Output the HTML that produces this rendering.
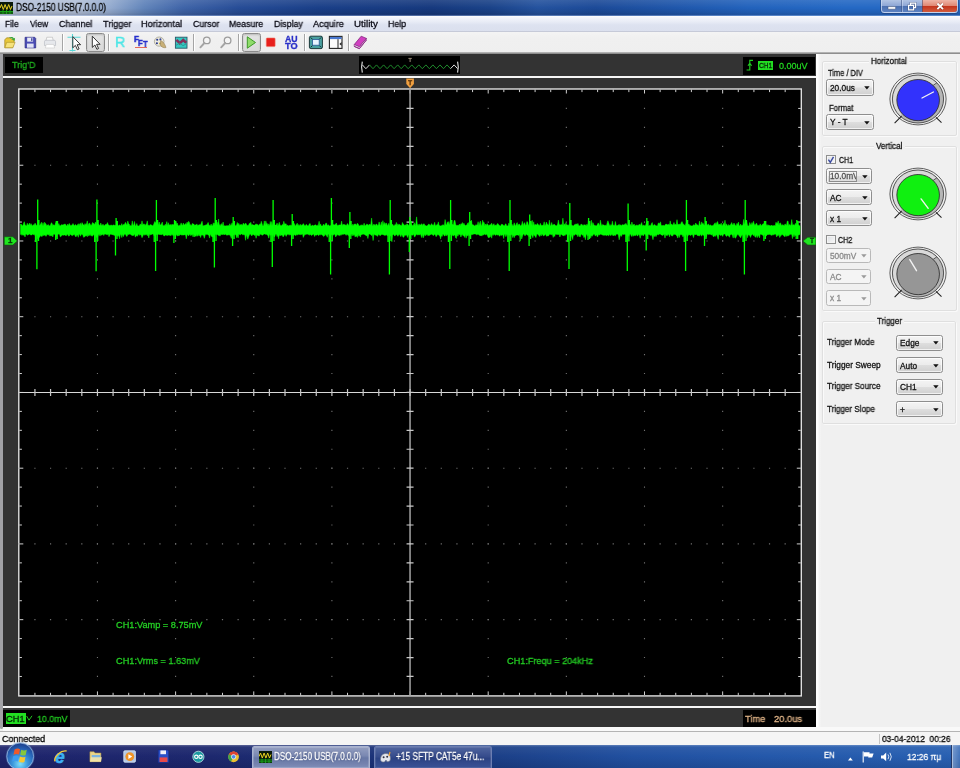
<!DOCTYPE html>
<html><head><meta charset="utf-8"><title>DSO-2150 USB(7.0.0.0)</title>
<style>
html,body{margin:0;padding:0;}
body{width:960px;height:768px;position:relative;overflow:hidden;background:#f0f0f0;font-family:"Liberation Sans",sans-serif;}
.t{position:absolute;height:20px;line-height:20px;white-space:pre;transform-origin:0 50%;will-change:transform;-webkit-text-stroke-width:0.28px;}
</style></head><body>
<div style="position:absolute;left:0.00px;top:0.00px;width:960.00px;height:16.20px;background:linear-gradient(90deg,#b4c0d6 0%,#b2c0d8 8%,#93aace 11.5%,#6184ba 15%,#3f64a8 19%,#264c96 25%,#1a3f88 33%,#16397e 45%,#1a4288 51%,#24529e 56%,#1c4a98 62%,#1f56aa 70%,#2262bc 78%,#2468c4 88%,#2468c4 100%);"></div>
<div style="position:absolute;left:0.00px;top:0.00px;width:960.00px;height:16.20px;background:linear-gradient(180deg,rgba(255,255,255,.10) 0%,rgba(255,255,255,0) 50%,rgba(0,0,0,.10) 82%,rgba(0,0,20,.18) 90%,rgba(190,210,245,.5) 100%);"></div>
<svg style="position:absolute;left:0;top:1.5px" width="13" height="12" viewBox="0 0 13 12"><rect width="13" height="12" fill="#0a1a0a"/><path d="M0,6l1.5,-3.5l1.8,5l1.8,-5l1.8,5l1.8,-5l1.8,5l1.5,-3.5" stroke="#e8d020" stroke-width="1" fill="none"/><path d="M0,9.5h13M0,11h13M3,8v4M6.5,8v4M10,8v4" stroke="#18a018" stroke-width="1"/></svg>
<div class="t" style="left:16.00px;top:-2.60px;font-size:10.6px;color:#000;transform:scaleX(0.7874);">DSO-2150 USB(7.0.0.0)</div>
<div style="position:absolute;left:880.60px;top:0.00px;width:77.40px;height:13.00px;border:1px solid rgba(200,215,240,.8);border-top:none;border-radius:0 0 3.5px 3.5px;box-sizing:border-box;background:linear-gradient(180deg,#b2c4e4 0%,#90a8d6 46%,#4c70b0 52%,#5c82c2 100%);box-shadow:0 0 0 1px rgba(30,50,100,.45);"></div>
<div style="position:absolute;left:922.40px;top:0.00px;width:34.60px;height:12.20px;background:linear-gradient(180deg,#efb4a6 0%,#e18a76 46%,#c4341c 52%,#d25c3e 100%);border-radius:0 0 3px 0;border-left:1px solid rgba(60,70,110,.55);box-sizing:border-box;"></div>
<div style="position:absolute;left:900.60px;top:0.00px;width:1.00px;height:12.20px;background:rgba(60,80,130,.55);box-shadow:1px 0 0 rgba(220,230,250,.45);"></div>
<svg style="position:absolute;left:881px;top:0" width="78" height="13" viewBox="881 0 78 13"><rect x="888" y="6.6" width="7.6" height="2.6" rx=".6" fill="#fff" stroke="#3a4a70" stroke-width=".5"/><path d="M908.6,5.3h5v4.6h-5zM910.6,5v-1.9h5v4.6h-1.8" stroke="#3a4a70" stroke-width="2" fill="none" opacity=".6"/><path d="M908.6,5.3h5v4.6h-5zM910.6,5v-1.9h5v4.6h-1.8" stroke="#fff" stroke-width="1.2" fill="none"/><path d="M937.4,3.5l5.6,5.6M943,3.5l-5.6,5.6" stroke="#5a2018" stroke-width="3" opacity=".55"/><path d="M937.4,3.5l5.6,5.6M943,3.5l-5.6,5.6" stroke="#fff" stroke-width="1.9"/></svg>
<div style="position:absolute;left:0.00px;top:16.10px;width:960.00px;height:15.50px;background:linear-gradient(180deg,#fefefe 0%,#f3f5fb 12%,#e8ecf6 38%,#dde2f0 60%,#dbe0ee 100%);border-bottom:1px solid #c6cad8;box-sizing:border-box;"></div>
<div class="t" style="left:5.30px;top:13.50px;font-size:9.4px;color:#0a0a14;transform:scaleX(0.8979);">File</div>
<div class="t" style="left:30.00px;top:13.50px;font-size:9.4px;color:#0a0a14;transform:scaleX(0.8908);">View</div>
<div class="t" style="left:59.00px;top:13.50px;font-size:9.4px;color:#0a0a14;transform:scaleX(0.9538);">Channel</div>
<div class="t" style="left:102.60px;top:13.50px;font-size:9.4px;color:#0a0a14;transform:scaleX(0.9719);">Trigger</div>
<div class="t" style="left:141.00px;top:13.50px;font-size:9.4px;color:#0a0a14;transform:scaleX(0.9759);">Horizontal</div>
<div class="t" style="left:193.00px;top:13.50px;font-size:9.4px;color:#0a0a14;transform:scaleX(0.9395);">Cursor</div>
<div class="t" style="left:229.30px;top:13.50px;font-size:9.4px;color:#0a0a14;transform:scaleX(0.9351);">Measure</div>
<div class="t" style="left:274.00px;top:13.50px;font-size:9.4px;color:#0a0a14;transform:scaleX(0.9409);">Display</div>
<div class="t" style="left:313.40px;top:13.50px;font-size:9.4px;color:#0a0a14;transform:scaleX(0.9726);">Acquire</div>
<div class="t" style="left:354.30px;top:13.50px;font-size:9.4px;color:#0a0a14;transform:scaleX(1.0445);">Utility</div>
<div class="t" style="left:388.20px;top:13.50px;font-size:9.4px;color:#0a0a14;transform:scaleX(0.9414);">Help</div>
<div style="position:absolute;left:0.00px;top:31.60px;width:960.00px;height:21.40px;background:linear-gradient(180deg,#f4f4f4,#f0f0f0 30%,#efefef);"></div>
<div style="position:absolute;left:0.00px;top:52.40px;width:960.00px;height:2.00px;background:linear-gradient(180deg,#c4c4c4,#7c7c7c);"></div>
<div style="position:absolute;left:62.00px;top:34.00px;width:1.00px;height:17.00px;background:#a5a5a5;box-shadow:1px 0 0 #fff;"></div>
<div style="position:absolute;left:107.50px;top:34.00px;width:1.00px;height:17.00px;background:#a5a5a5;box-shadow:1px 0 0 #fff;"></div>
<div style="position:absolute;left:193.20px;top:34.00px;width:1.00px;height:17.00px;background:#a5a5a5;box-shadow:1px 0 0 #fff;"></div>
<div style="position:absolute;left:237.80px;top:34.00px;width:1.00px;height:17.00px;background:#a5a5a5;box-shadow:1px 0 0 #fff;"></div>
<div style="position:absolute;left:303.50px;top:34.00px;width:1.00px;height:17.00px;background:#a5a5a5;box-shadow:1px 0 0 #fff;"></div>
<div style="position:absolute;left:347.80px;top:34.00px;width:1.00px;height:17.00px;background:#a5a5a5;box-shadow:1px 0 0 #fff;"></div>
<div style="position:absolute;left:86.00px;top:33.30px;width:19.30px;height:18.80px;border:1px solid #8b8b8b;border-radius:2.5px;box-sizing:border-box;background:linear-gradient(#e4e4e4,#dadada);box-shadow:inset 0 1px 2px rgba(0,0,0,.18);"></div>
<div style="position:absolute;left:241.50px;top:33.30px;width:19.30px;height:18.80px;border:1px solid #8b8b8b;border-radius:2.5px;box-sizing:border-box;background:linear-gradient(#e4e4e4,#dadada);box-shadow:inset 0 1px 2px rgba(0,0,0,.18);"></div>
<svg style="position:absolute;left:0;top:31px" width="400" height="24" viewBox="0 31 400 24"><g transform="translate(10,42.8) scale(.9) translate(-10.3,-41.8)"><path d="M4.5,38.5l2,-2.2h4l1.2,1.4h3.2v3l-1.6,6.5h-8.8z" fill="#e8c83a" stroke="#9a7a10" stroke-width=".7"/><path d="M4.6,47.3l2,-6h9.4l-2.6,6z" fill="#f6e27a" stroke="#a08418" stroke-width=".6"/><path d="M9,36.5c2,-1.6 4.5,-1.4 5.6,.4l1.4,-.8l-.6,3.4l-3,-1.1l1.1,-.7c-.9,-1.1 -2.6,-1.2 -4.5,-1.2z" fill="#36a636"/></g><g transform="translate(30.4,42.6) scale(.9) translate(-30.2,-42.1)"><path d="M24.3,36.2h10.6l1.2,1.2v10.6h-11.8z" fill="#4a4cb4" stroke="#2c2c84" stroke-width=".8"/><rect x="26.6" y="36.6" width="6.6" height="4.4" fill="#e8eaf6"/><rect x="31" y="37.2" width="1.5" height="3" fill="#3a3e9a"/><rect x="26.4" y="43.2" width="7.4" height="4.6" fill="#dfe2f4"/></g><g transform="translate(50,42.6) scale(.88) translate(-50.1,-42.1)"><path d="M46.5,36h6.4l1,4.5h-8.4z" fill="#fafafa" stroke="#aaa" stroke-width=".6"/><path d="M43.8,41c0,-1 .6,-1.6 1.6,-1.6h9.4c1,0 1.6,.6 1.6,1.6v4.4h-12.6z" fill="#e6e8ec" stroke="#b4b7c0" stroke-width=".7"/><path d="M45.8,44.2h8.6l1,4h-10.6z" fill="#fff" stroke="#c4c4c4" stroke-width=".6"/></g><path d="M67.5,37.2h13M72.5,34v17.5M69.5,50.5h6" stroke="#58d8d8" stroke-width="1.1" fill="none"/><path d="M72.8,36.6v11.2l2.6,-2.4l2,4.3l1.7,-.8l-2,-4.2h3.5z" fill="#fff" stroke="#222" stroke-width=".9" stroke-linejoin="round"/><path d="M92.3,36.2v11.2l2.6,-2.4l2,4.3l1.7,-.8l-2,-4.2h3.5z" fill="#fff" stroke="#222" stroke-width=".9" stroke-linejoin="round"/><circle cx="206.8" cy="40.4" r="3.3" fill="#f4f4f4" stroke="#9c9c9c" stroke-width="1.3"/><path d="M204.4,43l-4,4.3" stroke="#a4a4a4" stroke-width="1.9" stroke-linecap="round"/><circle cx="227.60000000000002" cy="40.4" r="3.3" fill="#f4f4f4" stroke="#9c9c9c" stroke-width="1.3"/><path d="M225.20000000000002,43l-4,4.3" stroke="#a4a4a4" stroke-width="1.9" stroke-linecap="round"/><ellipse cx="159.2" cy="41.6" rx="4.8" ry="4.6" fill="#eceadf" stroke="#9a9684" stroke-width=".7"/><circle cx="157.2" cy="39.8" r="1.05" fill="#2a3a8a"/><circle cx="160.4" cy="39.4" r="1.05" fill="#3a4a9a"/><circle cx="156.9" cy="43.2" r="1.05" fill="#2a3a8a"/><circle cx="160" cy="43.4" r="1" fill="#c8b040"/><path d="M160.6,40.4c2.4,1 4.6,4 5.4,7.2c-2.4,.6 -4.8,-.6 -5.6,-2.6z" fill="#c8b078" stroke="#8a7448" stroke-width=".5"/><rect x="175.4" y="37.2" width="11.6" height="11" fill="#34c8c0" stroke="#2a5868" stroke-width=".9"/><path d="M176.4,39.8l3.4,3.4l3.4,-3.2l3,2.8" stroke="#86305a" stroke-width="2.6" fill="none"/><path d="M175.8,45.4l3.8,-2.2l3.4,2.4l3.8,-2" stroke="#2a9a98" stroke-width="1" fill="none"/><path d="M247.3,36.8l8.2,5.7l-8.2,5.7z" fill="#8fdc6a" stroke="#3e9a28" stroke-width="1"/><rect x="266.3" y="38" width="8.8" height="8.6" rx=".8" fill="#e8201c" stroke="#f07060" stroke-width=".6"/><rect x="309.4" y="36.2" width="13" height="12.4" rx="1.4" fill="#4aa0a0" stroke="#1c3a3a" stroke-width="1"/><rect x="312.6" y="39.6" width="6.6" height="5.6" fill="#e8f4ff" stroke="#2a5a9a" stroke-width=".8"/><path d="M310.6,37.4l1.8,1.8M321.2,37.4l-1.8,1.8M310.6,47.4l1.8,-1.8M321.2,47.4l-1.8,-1.8" stroke="#0c2424" stroke-width=".9"/><rect x="329.4" y="36.4" width="12.6" height="12" fill="#fbfbfb" stroke="#222" stroke-width="1.1"/><rect x="329.9" y="36.9" width="11.6" height="2.2" fill="#4a78d0"/><path d="M338,39.2v9" stroke="#222" stroke-width="1"/><path d="M341.6,42l-2.2,1.9l2.2,1.9z" fill="#222"/><path d="M354.2,44.6l7,-8.4l5.2,2.2l-7,8.4z" fill="#d040c0" stroke="#7a1a74" stroke-width=".7"/><path d="M354.2,44.6l5.2,2.2l7,-8.4v1.6l-7,8.6l-5.2,-2.2z" fill="#f4e6f4" stroke="#7a1a74" stroke-width=".6"/><path d="M354.2,46.4l5.2,2.2l7,-8.6" stroke="#902a8a" stroke-width="1" fill="none"/></svg>
<div class="t" style="left:114.60px;top:32.30px;font-size:14.8px;color:#4ee6e6;transform:scaleX(0.9543);-webkit-text-stroke:0.5px #4ee6e6;">R</div>
<div class="t" style="left:134.00px;top:29.40px;font-size:9.4px;color:#2630cc;font-weight:bold;transform:scaleX(0.8708);-webkit-text-stroke:0.5px #2630cc;">F</div>
<div class="t" style="left:138.40px;top:32.60px;font-size:9.4px;color:#2630cc;font-weight:bold;transform:scaleX(0.8011);-webkit-text-stroke:0.5px #2630cc;">F</div>
<div class="t" style="left:142.50px;top:33.90px;font-size:9.0px;color:#2630cc;font-weight:bold;transform:scaleX(0.8367);-webkit-text-stroke:0.5px #2630cc;">T</div>
<div style="position:absolute;left:134.60px;top:46.90px;width:12.60px;height:1.20px;background:#e05040;opacity:.85;"></div>
<div class="t" style="left:284.60px;top:28.80px;font-size:8.6px;color:#2a30c8;font-weight:bold;transform:scaleX(1.0144);">AU</div>
<div class="t" style="left:284.60px;top:35.90px;font-size:8.6px;color:#2a30c8;font-weight:bold;transform:scaleX(1.0689);">TO</div>
<div style="position:absolute;left:0.00px;top:54.20px;width:815.90px;height:673.20px;background:#333;"></div>
<div style="position:absolute;left:0.00px;top:54.20px;width:2.80px;height:674.60px;background:#a2a2a6;border-radius:0 0 2px 2px;"></div>
<div style="position:absolute;left:2.60px;top:76.00px;width:813.60px;height:1.90px;background:#f6f6f6;"></div>
<div style="position:absolute;left:2.60px;top:705.70px;width:813.60px;height:1.90px;background:#f6f6f6;"></div>
<div style="position:absolute;left:5.00px;top:57.00px;width:37.50px;height:16.00px;background:#000;"></div>
<div class="t" style="left:11.60px;top:55.40px;font-size:9.2px;color:#1fb01f;transform:scaleX(0.9831);">Trig'D</div>
<div style="position:absolute;left:359.00px;top:56.00px;width:100.80px;height:17.80px;background:#000;"></div>
<svg style="position:absolute;left:359px;top:56px" width="102" height="18" viewBox="359 56 102 18"><path d="M362.4,64.9 365.9,68.7 369.5,64.9" stroke="#ddd" stroke-width="1" fill="none"/><path d="M369.5,64.9 373.0,68.7 376.5,64.9 380.0,68.7 383.6,64.9 387.1,68.7 390.6,64.9 394.1,68.7 397.7,64.9 401.2,68.7 404.7,64.9 408.2,68.7 411.8,64.9 415.3,68.7 418.8,64.9 422.3,68.7 425.9,64.9 429.4,68.7 432.9,64.9 436.4,68.7 440.0,64.9 443.5,68.7 447.0,64.9 450.5,68.7" stroke="#1f8a2c" stroke-width="1" fill="none"/><path d="M450.5,68.7 454.1,64.9 457.6,68.7" stroke="#ddd" stroke-width="1" fill="none"/><path d="M362.3,61.7q-1.4,5.5 0,10.9M457.6,61.7q1.4,5.5 0,10.9" stroke="#e8e8e8" stroke-width="1.1" fill="none"/><path d="M408.4,58.4h3.4M410.1,58.4v3.6" stroke="#9a8a78" stroke-width="1" fill="none"/></svg>
<div style="position:absolute;left:742.50px;top:56.60px;width:72.00px;height:18.20px;background:#000;"></div>
<svg style="position:absolute;left:744px;top:58px" width="12" height="14" viewBox="744 58 12 14"><path d="M746.6,70h3.2v-9.6h3.2M748,65.8l1.8,-2.6l1.8,2.6" stroke="#20d020" stroke-width="1.1" fill="none"/></svg>
<div style="position:absolute;left:757.60px;top:61.40px;width:15.00px;height:8.60px;background:#22e022;"></div>
<div class="t" style="left:758.60px;top:55.80px;font-size:7.2px;color:#062006;transform:scaleX(0.9025);">CH1</div>
<div class="t" style="left:779.20px;top:55.60px;font-size:9px;color:#22d422;transform:scaleX(0.9991);">0.00uV</div>
<div style="position:absolute;left:3.20px;top:710.00px;width:67.00px;height:17.40px;background:#000;"></div>
<div style="position:absolute;left:5.50px;top:713.00px;width:20.40px;height:11.20px;background:#22e022;"></div>
<div class="t" style="left:6.40px;top:708.80px;font-size:9.4px;color:#042004;transform:scaleX(0.9891);">CH1</div>
<svg style="position:absolute;left:26px;top:713px" width="8" height="10" viewBox="26 713 8 10"><path d="M26.6,716l2.4,4.2l3,-4.4" stroke="#20c020" stroke-width="1" fill="none"/></svg>
<div class="t" style="left:36.80px;top:708.80px;font-size:9.2px;color:#20c820;transform:scaleX(0.9619);">10.0mV</div>
<div style="position:absolute;left:743.00px;top:710.10px;width:72.90px;height:17.20px;background:#000;"></div>
<div class="t" style="left:744.80px;top:708.90px;font-size:9.6px;color:#e0b488;transform:scaleX(0.9629);">Time</div>
<div class="t" style="left:774.20px;top:708.90px;font-size:9.6px;color:#e0b488;transform:scaleX(0.9749);">20.0us</div>
<svg style="position:absolute;left:0;top:0" width="960" height="768" viewBox="0 0 960 768"><rect x="18.8" y="89.0" width="782.5" height="606.9" fill="#000" stroke="#e0e0e0" stroke-width="1.4"/><g stroke="#707070" stroke-width="1.1"><line x1="18.70" x2="800.80" y1="165.24" y2="165.24" stroke-dasharray="1.2 14.430"/><line x1="18.70" x2="800.80" y1="240.97" y2="240.97" stroke-dasharray="1.2 14.430"/><line x1="18.70" x2="800.80" y1="316.71" y2="316.71" stroke-dasharray="1.2 14.430"/><line x1="18.70" x2="800.80" y1="468.19" y2="468.19" stroke-dasharray="1.2 14.430"/><line x1="18.70" x2="800.80" y1="543.92" y2="543.92" stroke-dasharray="1.2 14.430"/><line x1="18.70" x2="800.80" y1="619.66" y2="619.66" stroke-dasharray="1.2 14.430"/><line x1="97.45" x2="97.45" y1="88.90" y2="695.40" stroke-dasharray="1.2 17.734"/><line x1="175.60" x2="175.60" y1="88.90" y2="695.40" stroke-dasharray="1.2 17.734"/><line x1="253.75" x2="253.75" y1="88.90" y2="695.40" stroke-dasharray="1.2 17.734"/><line x1="331.90" x2="331.90" y1="88.90" y2="695.40" stroke-dasharray="1.2 17.734"/><line x1="488.20" x2="488.20" y1="88.90" y2="695.40" stroke-dasharray="1.2 17.734"/><line x1="566.35" x2="566.35" y1="88.90" y2="695.40" stroke-dasharray="1.2 17.734"/><line x1="644.50" x2="644.50" y1="88.90" y2="695.40" stroke-dasharray="1.2 17.734"/><line x1="722.65" x2="722.65" y1="88.90" y2="695.40" stroke-dasharray="1.2 17.734"/></g><path d="M34.93,89.5v2.6M34.93,695.4v-2.6M50.56,89.5v2.6M50.56,695.4v-2.6M66.19,89.5v2.6M66.19,695.4v-2.6M81.82,89.5v2.6M81.82,695.4v-2.6M97.45,89.5v4.0M97.45,695.4v-4.0M113.08,89.5v2.6M113.08,695.4v-2.6M128.71,89.5v2.6M128.71,695.4v-2.6M144.34,89.5v2.6M144.34,695.4v-2.6M159.97,89.5v2.6M159.97,695.4v-2.6M175.60,89.5v4.0M175.60,695.4v-4.0M191.23,89.5v2.6M191.23,695.4v-2.6M206.86,89.5v2.6M206.86,695.4v-2.6M222.49,89.5v2.6M222.49,695.4v-2.6M238.12,89.5v2.6M238.12,695.4v-2.6M253.75,89.5v4.0M253.75,695.4v-4.0M269.38,89.5v2.6M269.38,695.4v-2.6M285.01,89.5v2.6M285.01,695.4v-2.6M300.64,89.5v2.6M300.64,695.4v-2.6M316.27,89.5v2.6M316.27,695.4v-2.6M331.90,89.5v4.0M331.90,695.4v-4.0M347.53,89.5v2.6M347.53,695.4v-2.6M363.16,89.5v2.6M363.16,695.4v-2.6M378.79,89.5v2.6M378.79,695.4v-2.6M394.42,89.5v2.6M394.42,695.4v-2.6M410.05,89.5v4.0M410.05,695.4v-4.0M425.68,89.5v2.6M425.68,695.4v-2.6M441.31,89.5v2.6M441.31,695.4v-2.6M456.94,89.5v2.6M456.94,695.4v-2.6M472.57,89.5v2.6M472.57,695.4v-2.6M488.20,89.5v4.0M488.20,695.4v-4.0M503.83,89.5v2.6M503.83,695.4v-2.6M519.46,89.5v2.6M519.46,695.4v-2.6M535.09,89.5v2.6M535.09,695.4v-2.6M550.72,89.5v2.6M550.72,695.4v-2.6M566.35,89.5v4.0M566.35,695.4v-4.0M581.98,89.5v2.6M581.98,695.4v-2.6M597.61,89.5v2.6M597.61,695.4v-2.6M613.24,89.5v2.6M613.24,695.4v-2.6M628.87,89.5v2.6M628.87,695.4v-2.6M644.50,89.5v4.0M644.50,695.4v-4.0M660.13,89.5v2.6M660.13,695.4v-2.6M675.76,89.5v2.6M675.76,695.4v-2.6M691.39,89.5v2.6M691.39,695.4v-2.6M707.02,89.5v2.6M707.02,695.4v-2.6M722.65,89.5v4.0M722.65,695.4v-4.0M738.28,89.5v2.6M738.28,695.4v-2.6M753.91,89.5v2.6M753.91,695.4v-2.6M769.54,89.5v2.6M769.54,695.4v-2.6M785.17,89.5v2.6M785.17,695.4v-2.6M19.3,108.43h2.6M800.8,108.43h-2.6M19.3,127.37h2.6M800.8,127.37h-2.6M19.3,146.30h2.6M800.8,146.30h-2.6M19.3,165.24h4.0M800.8,165.24h-4.0M19.3,184.17h2.6M800.8,184.17h-2.6M19.3,203.11h2.6M800.8,203.11h-2.6M19.3,222.04h2.6M800.8,222.04h-2.6M19.3,240.97h4.0M800.8,240.97h-4.0M19.3,259.91h2.6M800.8,259.91h-2.6M19.3,278.84h2.6M800.8,278.84h-2.6M19.3,297.78h2.6M800.8,297.78h-2.6M19.3,316.71h4.0M800.8,316.71h-4.0M19.3,335.65h2.6M800.8,335.65h-2.6M19.3,354.58h2.6M800.8,354.58h-2.6M19.3,373.52h2.6M800.8,373.52h-2.6M19.3,392.45h4.0M800.8,392.45h-4.0M19.3,411.38h2.6M800.8,411.38h-2.6M19.3,430.32h2.6M800.8,430.32h-2.6M19.3,449.25h2.6M800.8,449.25h-2.6M19.3,468.19h4.0M800.8,468.19h-4.0M19.3,487.12h2.6M800.8,487.12h-2.6M19.3,506.06h2.6M800.8,506.06h-2.6M19.3,524.99h2.6M800.8,524.99h-2.6M19.3,543.92h4.0M800.8,543.92h-4.0M19.3,562.86h2.6M800.8,562.86h-2.6M19.3,581.79h2.6M800.8,581.79h-2.6M19.3,600.73h2.6M800.8,600.73h-2.6M19.3,619.66h4.0M800.8,619.66h-4.0M19.3,638.60h2.6M800.8,638.60h-2.6M19.3,657.53h2.6M800.8,657.53h-2.6M19.3,676.47h2.6M800.8,676.47h-2.6" stroke="#d0d0d0" stroke-width="1" fill="none"/><path d="M19.3,392.45H800.8" stroke="#d8d8d8" stroke-width="1.1" fill="none"/><path d="M410.05,89.5V695.4" stroke="#9a9a9a" stroke-width="1.6" fill="none"/><path d="M34.93,388.95v7M50.56,388.95v7M66.19,388.95v7M81.82,388.95v7M97.45,388.95v7M113.08,388.95v7M128.71,388.95v7M144.34,388.95v7M159.97,388.95v7M175.60,388.95v7M191.23,388.95v7M206.86,388.95v7M222.49,388.95v7M238.12,388.95v7M253.75,388.95v7M269.38,388.95v7M285.01,388.95v7M300.64,388.95v7M316.27,388.95v7M331.90,388.95v7M347.53,388.95v7M363.16,388.95v7M378.79,388.95v7M394.42,388.95v7M410.05,388.95v7M425.68,388.95v7M441.31,388.95v7M456.94,388.95v7M472.57,388.95v7M488.20,388.95v7M503.83,388.95v7M519.46,388.95v7M535.09,388.95v7M550.72,388.95v7M566.35,388.95v7M581.98,388.95v7M597.61,388.95v7M613.24,388.95v7M628.87,388.95v7M644.50,388.95v7M660.13,388.95v7M675.76,388.95v7M691.39,388.95v7M707.02,388.95v7M722.65,388.95v7M738.28,388.95v7M753.91,388.95v7M769.54,388.95v7M785.17,388.95v7M406.55,108.43h7M406.55,127.37h7M406.55,146.30h7M406.55,165.24h7M406.55,184.17h7M406.55,203.11h7M406.55,222.04h7M406.55,240.97h7M406.55,259.91h7M406.55,278.84h7M406.55,297.78h7M406.55,316.71h7M406.55,335.65h7M406.55,354.58h7M406.55,373.52h7M406.55,392.45h7M406.55,411.38h7M406.55,430.32h7M406.55,449.25h7M406.55,468.19h7M406.55,487.12h7M406.55,506.06h7M406.55,524.99h7M406.55,543.92h7M406.55,562.86h7M406.55,581.79h7M406.55,600.73h7M406.55,619.66h7M406.55,638.60h7M406.55,657.53h7M406.55,676.47h7" stroke="#c8c8c8" stroke-width="1.2" fill="none"/><path d="M20.5,224.1 21.3,224.2 22.0,225.3 22.8,225.9 23.5,223.6 24.3,221.7 25.0,224.8 25.8,225.5 26.5,226.1 27.3,223.2 28.0,224.9 28.8,224.9 29.5,223.0 30.3,225.6 31.0,223.6 31.8,225.2 32.5,226.1 33.3,224.6 34.0,225.6 34.8,223.4 35.5,223.5 36.3,225.6 37.0,225.2 37.8,225.2 38.5,224.9 39.3,225.6 40.0,225.0 40.8,223.6 41.5,222.2 42.3,226.0 43.0,222.7 43.8,226.0 44.5,222.2 45.3,223.2 46.0,224.1 46.8,226.1 47.5,225.1 48.3,224.5 49.0,225.7 49.8,225.9 50.5,225.1 51.3,222.8 52.0,223.2 52.8,225.4 53.5,224.8 54.3,225.2 55.0,225.3 55.8,222.6 56.5,225.3 57.3,222.6 58.0,225.8 58.8,223.5 59.5,225.5 60.3,225.8 61.0,225.3 61.8,224.6 62.5,225.0 63.3,224.7 64.0,224.5 64.8,224.1 65.5,224.2 66.3,225.9 67.0,225.7 67.8,224.0 68.5,225.8 69.3,223.4 70.0,224.7 70.8,225.8 71.5,225.2 72.3,225.0 73.0,223.5 73.8,224.9 74.5,225.7 75.3,224.5 76.0,224.9 76.8,225.9 77.5,224.8 78.3,223.7 79.0,225.7 79.8,223.7 80.5,223.2 81.3,225.8 82.0,222.6 82.8,224.0 83.5,224.7 84.3,225.5 85.0,223.6 85.8,224.7 86.5,224.1 87.3,220.9 88.0,226.0 88.8,223.6 89.5,223.1 90.3,224.4 91.0,225.4 91.8,224.5 92.5,222.5 93.3,223.3 94.0,223.4 94.8,224.6 95.5,222.0 96.3,223.5 97.0,225.9 97.8,225.6 98.5,224.3 99.3,225.1 100.0,225.5 100.8,223.0 101.5,225.5 102.3,225.2 103.0,224.2 103.8,225.5 104.5,225.8 105.3,224.5 106.0,224.4 106.8,224.3 107.5,222.6 108.3,225.3 109.0,224.7 109.8,225.7 110.5,225.3 111.3,225.1 112.0,225.6 112.8,225.6 113.5,224.7 114.3,225.5 115.0,224.9 115.8,225.5 116.5,224.8 117.3,223.7 118.0,225.9 118.8,225.5 119.5,225.0 120.3,225.3 121.0,226.1 121.8,223.6 122.5,226.0 123.3,224.6 124.0,224.7 124.8,223.7 125.5,222.3 126.3,224.0 127.0,225.2 127.8,221.1 128.5,223.5 129.3,224.2 130.0,225.9 130.8,225.5 131.5,226.0 132.3,220.9 133.0,225.3 133.8,225.0 134.5,221.5 135.3,225.9 136.0,225.6 136.8,223.5 137.5,225.8 138.3,226.0 139.0,225.9 139.8,224.7 140.5,223.9 141.3,225.0 142.0,220.9 142.8,225.3 143.5,223.9 144.3,223.9 145.0,225.6 145.8,224.4 146.5,224.1 147.3,220.9 148.0,226.1 148.8,225.1 149.5,225.7 150.3,224.4 151.0,225.2 151.8,224.9 152.5,226.0 153.3,225.2 154.0,223.5 154.8,221.5 155.5,223.0 156.3,221.8 157.0,222.4 157.8,221.7 158.5,225.5 159.3,222.0 160.0,224.9 160.8,224.9 161.5,223.7 162.3,222.1 163.0,226.0 163.8,225.6 164.5,225.8 165.3,224.2 166.0,225.7 166.8,221.6 167.5,225.9 168.3,222.7 169.0,225.2 169.8,224.8 170.5,224.6 171.3,225.4 172.0,224.1 172.8,225.0 173.5,224.5 174.3,225.2 175.0,224.6 175.8,221.7 176.6,224.4 177.3,223.1 178.1,225.8 178.8,225.7 179.6,225.2 180.3,225.6 181.1,222.9 181.8,224.6 182.6,225.6 183.3,223.0 184.1,225.1 184.8,224.8 185.6,223.5 186.3,225.0 187.1,222.1 187.8,224.1 188.6,221.3 189.3,222.2 190.1,225.6 190.8,224.5 191.6,226.1 192.3,223.4 193.1,223.9 193.8,224.1 194.6,225.2 195.3,225.0 196.1,225.1 196.8,223.9 197.6,225.4 198.3,225.3 199.1,224.5 199.8,224.9 200.6,224.8 201.3,223.1 202.1,221.2 202.8,225.7 203.6,225.7 204.3,225.6 205.1,225.3 205.8,224.9 206.6,224.8 207.3,224.3 208.1,222.4 208.8,224.6 209.6,225.4 210.3,226.1 211.1,224.1 211.8,225.4 212.6,225.9 213.3,222.8 214.1,225.2 214.8,223.1 215.6,225.8 216.3,225.9 217.1,222.2 217.8,225.3 218.6,219.0 219.3,225.6 220.1,224.4 220.8,225.9 221.6,223.6 222.3,225.8 223.1,222.0 223.8,226.0 224.6,225.8 225.3,225.9 226.1,225.8 226.8,225.7 227.6,225.7 228.3,225.5 229.1,225.9 229.8,223.7 230.6,225.8 231.3,225.0 232.1,222.8 232.8,225.6 233.6,222.9 234.3,223.8 235.1,225.4 235.8,225.9 236.6,224.7 237.3,222.4 238.1,224.8 238.8,223.3 239.6,225.4 240.3,224.4 241.1,225.2 241.8,224.2 242.6,225.6 243.3,223.1 244.1,223.9 244.8,224.7 245.6,223.0 246.3,224.1 247.1,225.8 247.8,225.2 248.6,225.3 249.3,223.4 250.1,223.5 250.8,222.3 251.6,225.3 252.3,224.5 253.1,225.0 253.8,225.1 254.6,225.2 255.3,224.8 256.1,223.8 256.8,224.6 257.6,224.4 258.3,226.1 259.1,224.4 259.8,224.2 260.6,224.2 261.3,221.3 262.1,224.0 262.8,226.1 263.6,225.4 264.3,220.9 265.1,224.9 265.8,220.9 266.6,223.8 267.3,223.6 268.1,226.1 268.8,223.8 269.6,226.0 270.3,221.5 271.1,225.5 271.8,221.5 272.6,225.4 273.3,224.3 274.1,225.1 274.8,225.1 275.6,225.1 276.3,225.0 277.1,223.1 277.8,225.9 278.6,224.4 279.3,222.3 280.1,225.2 280.8,225.6 281.6,225.7 282.3,224.5 283.1,224.9 283.8,221.3 284.6,224.3 285.3,224.0 286.1,223.7 286.8,226.1 287.6,225.1 288.3,225.7 289.1,226.1 289.8,225.1 290.6,225.2 291.3,225.7 292.1,224.7 292.8,225.2 293.6,225.0 294.3,223.5 295.1,225.8 295.8,225.7 296.6,224.0 297.3,223.2 298.1,225.9 298.8,224.5 299.6,225.9 300.3,224.3 301.1,226.0 301.8,224.8 302.6,224.9 303.3,223.6 304.1,224.8 304.8,226.0 305.6,225.4 306.3,224.3 307.1,225.2 307.8,226.1 308.6,225.4 309.3,224.0 310.1,223.4 310.8,225.9 311.6,226.0 312.3,225.1 313.1,225.8 313.8,225.8 314.6,225.0 315.3,224.8 316.1,225.2 316.8,225.8 317.6,225.2 318.3,225.7 319.1,221.3 319.8,225.4 320.6,223.9 321.3,226.1 322.1,226.0 322.8,225.8 323.6,224.0 324.3,225.8 325.1,224.7 325.8,223.2 326.6,223.2 327.3,226.1 328.1,224.7 328.8,225.3 329.6,225.9 330.3,225.4 331.1,225.7 331.8,225.3 332.6,223.9 333.4,224.7 334.1,224.8 334.9,225.1 335.6,224.1 336.4,223.1 337.1,225.7 337.9,225.2 338.6,225.2 339.4,224.9 340.1,224.9 340.9,224.9 341.6,221.1 342.4,225.7 343.1,224.3 343.9,224.7 344.6,224.6 345.4,225.0 346.1,225.4 346.9,224.6 347.6,223.5 348.4,224.9 349.1,225.6 349.9,221.6 350.6,224.7 351.4,225.2 352.1,225.8 352.9,224.1 353.6,226.0 354.4,224.0 355.1,224.0 355.9,224.2 356.6,225.6 357.4,223.2 358.1,224.0 358.9,225.5 359.6,226.0 360.4,225.3 361.1,225.4 361.9,224.8 362.6,225.2 363.4,225.7 364.1,223.2 364.9,225.8 365.6,225.4 366.4,224.4 367.1,223.9 367.9,224.7 368.6,225.5 369.4,224.0 370.1,225.3 370.9,224.1 371.6,218.1 372.4,225.8 373.1,225.5 373.9,224.1 374.6,225.1 375.4,225.4 376.1,224.1 376.9,224.2 377.6,225.8 378.4,225.0 379.1,221.9 379.9,224.7 380.6,225.8 381.4,221.9 382.1,225.9 382.9,220.7 383.6,224.9 384.4,222.4 385.1,224.9 385.9,223.1 386.6,223.3 387.4,225.9 388.1,224.8 388.9,223.3 389.6,225.9 390.4,225.1 391.1,223.8 391.9,225.6 392.6,224.1 393.4,225.8 394.1,225.9 394.9,224.5 395.6,225.1 396.4,222.4 397.1,226.0 397.9,223.8 398.6,225.2 399.4,224.2 400.1,225.2 400.9,225.2 401.6,226.1 402.4,222.4 403.1,224.0 403.9,224.4 404.6,225.5 405.4,224.7 406.1,225.4 406.9,223.7 407.6,224.0 408.4,225.5 409.1,224.7 409.9,224.4 410.6,223.9 411.4,224.3 412.1,225.1 412.9,226.0 413.6,224.5 414.4,222.7 415.1,225.8 415.9,223.3 416.6,216.9 417.4,225.8 418.1,224.2 418.9,225.7 419.6,224.3 420.4,224.9 421.1,224.4 421.9,223.7 422.6,225.7 423.4,224.1 424.1,223.7 424.9,225.6 425.6,225.5 426.4,226.0 427.1,225.8 427.9,225.2 428.6,224.1 429.4,224.4 430.1,225.6 430.9,224.9 431.6,223.6 432.4,225.2 433.1,224.7 433.9,225.4 434.6,222.3 435.4,225.8 436.1,225.4 436.9,224.6 437.6,224.7 438.4,221.9 439.1,225.8 439.9,225.4 440.6,226.0 441.4,226.1 442.1,224.8 442.9,225.4 443.6,224.8 444.4,225.7 445.1,219.6 445.9,224.6 446.6,225.1 447.4,221.8 448.1,223.7 448.9,221.5 449.6,224.2 450.4,225.0 451.1,225.1 451.9,225.3 452.6,224.2 453.4,225.1 454.1,220.7 454.9,220.3 455.6,224.2 456.4,225.5 457.1,225.6 457.9,225.3 458.6,225.6 459.4,224.1 460.1,225.7 460.9,223.7 461.6,224.3 462.4,222.5 463.1,225.0 463.9,223.2 464.6,224.8 465.4,225.8 466.1,225.0 466.9,225.2 467.6,223.2 468.4,222.6 469.1,225.3 469.9,225.0 470.6,225.0 471.4,220.1 472.1,224.6 472.9,224.8 473.6,224.9 474.4,225.9 475.1,225.9 475.9,224.6 476.6,225.2 477.4,224.9 478.1,221.7 478.9,226.1 479.6,223.3 480.4,221.1 481.1,225.4 481.9,224.9 482.6,220.2 483.4,222.6 484.1,222.4 484.9,226.0 485.6,224.0 486.4,225.6 487.1,223.6 487.9,224.5 488.7,226.0 489.4,225.1 490.2,224.6 490.9,225.1 491.7,223.1 492.4,225.7 493.2,224.4 493.9,223.7 494.7,226.0 495.4,225.0 496.2,225.6 496.9,224.5 497.7,223.4 498.4,224.5 499.2,224.9 499.9,225.9 500.7,226.1 501.4,224.3 502.2,224.6 502.9,224.6 503.7,225.8 504.4,225.9 505.2,224.3 505.9,223.8 506.7,225.9 507.4,225.9 508.2,225.5 508.9,223.1 509.7,225.5 510.4,225.8 511.2,225.9 511.9,224.1 512.7,225.8 513.4,225.9 514.2,222.8 514.9,224.8 515.7,225.9 516.4,223.7 517.2,222.6 517.9,225.8 518.7,224.3 519.4,224.0 520.2,225.7 520.9,225.8 521.7,224.4 522.4,221.4 523.2,225.7 523.9,223.7 524.7,222.6 525.4,225.3 526.2,225.0 526.9,221.5 527.7,222.1 528.4,225.2 529.2,225.0 529.9,222.6 530.7,225.8 531.4,224.0 532.2,220.2 532.9,225.7 533.7,221.8 534.4,225.4 535.2,224.3 535.9,224.9 536.7,224.9 537.4,223.4 538.2,224.4 538.9,225.3 539.7,225.4 540.4,223.3 541.2,225.9 541.9,224.9 542.7,225.6 543.4,224.9 544.2,221.8 544.9,226.1 545.7,224.6 546.4,222.0 547.2,224.2 547.9,224.6 548.7,225.6 549.4,220.2 550.2,225.7 550.9,225.4 551.7,222.5 552.4,225.3 553.2,225.1 553.9,224.2 554.7,224.6 555.4,225.5 556.2,225.8 556.9,225.8 557.7,224.1 558.4,220.1 559.2,224.9 559.9,224.4 560.7,224.9 561.4,224.4 562.2,225.1 562.9,218.2 563.7,225.7 564.4,223.8 565.2,225.5 565.9,222.7 566.7,224.9 567.4,224.9 568.2,225.5 568.9,224.6 569.7,224.7 570.4,225.7 571.2,225.4 571.9,224.8 572.7,225.9 573.4,225.9 574.2,224.9 574.9,224.4 575.7,224.2 576.4,224.1 577.2,224.5 577.9,223.4 578.7,225.5 579.4,225.8 580.2,226.0 580.9,224.3 581.7,224.3 582.4,225.1 583.2,225.7 583.9,224.6 584.7,225.0 585.4,225.0 586.2,225.7 586.9,224.2 587.7,225.5 588.4,220.5 589.2,222.6 589.9,225.7 590.7,225.9 591.4,220.2 592.2,225.8 592.9,222.6 593.7,224.5 594.4,225.2 595.2,225.8 595.9,225.4 596.7,226.0 597.4,224.6 598.2,222.9 598.9,224.0 599.7,225.9 600.4,220.2 601.2,224.3 601.9,226.1 602.7,224.4 603.4,224.9 604.2,225.0 604.9,225.9 605.7,224.9 606.4,225.9 607.2,222.9 607.9,220.8 608.7,223.1 609.4,224.9 610.2,225.9 610.9,224.6 611.7,225.4 612.4,221.2 613.2,225.8 613.9,224.9 614.7,226.0 615.4,221.5 616.2,225.7 616.9,225.5 617.7,225.4 618.4,225.0 619.2,224.3 619.9,225.5 620.7,224.7 621.4,226.0 622.2,224.7 622.9,224.8 623.7,224.9 624.4,224.4 625.2,224.6 625.9,223.3 626.7,224.9 627.4,225.5 628.2,225.3 628.9,225.7 629.7,224.6 630.4,224.4 631.2,226.0 631.9,222.0 632.7,225.6 633.4,224.8 634.2,224.0 634.9,226.1 635.7,225.5 636.4,225.2 637.2,224.9 637.9,225.8 638.7,225.1 639.4,224.2 640.2,225.5 640.9,224.2 641.7,222.5 642.4,226.1 643.2,225.2 643.9,225.2 644.7,225.8 645.5,225.6 646.2,223.5 647.0,221.9 647.7,226.0 648.5,226.0 649.2,225.4 650.0,225.6 650.7,225.7 651.5,223.4 652.2,222.5 653.0,225.7 653.7,225.2 654.5,224.4 655.2,225.4 656.0,225.4 656.7,225.9 657.5,226.0 658.2,223.3 659.0,222.9 659.7,223.9 660.5,221.8 661.2,225.5 662.0,225.6 662.7,225.6 663.5,225.3 664.2,226.1 665.0,225.0 665.7,224.2 666.5,224.1 667.2,224.8 668.0,224.7 668.7,224.2 669.5,225.3 670.2,220.9 671.0,225.1 671.7,224.0 672.5,225.2 673.2,224.5 674.0,222.5 674.7,225.0 675.5,224.2 676.2,224.9 677.0,219.7 677.7,224.3 678.5,224.5 679.2,224.3 680.0,224.2 680.7,224.2 681.5,221.9 682.2,221.7 683.0,224.1 683.7,224.3 684.5,225.1 685.2,225.7 686.0,223.4 686.7,222.1 687.5,225.9 688.2,224.6 689.0,224.1 689.7,225.6 690.5,225.4 691.2,226.0 692.0,225.8 692.7,226.0 693.5,224.7 694.2,225.0 695.0,225.5 695.7,223.0 696.5,224.6 697.2,224.8 698.0,225.3 698.7,225.9 699.5,221.1 700.2,225.1 701.0,224.9 701.7,221.9 702.5,223.9 703.2,223.3 704.0,224.9 704.7,225.3 705.5,225.8 706.2,225.5 707.0,225.5 707.7,224.5 708.5,224.0 709.2,226.0 710.0,224.7 710.7,225.3 711.5,225.7 712.2,225.7 713.0,225.4 713.7,225.0 714.5,223.6 715.2,222.7 716.0,225.1 716.7,222.8 717.5,221.5 718.2,223.8 719.0,225.3 719.7,224.0 720.5,225.1 721.2,223.1 722.0,226.0 722.7,225.0 723.5,223.2 724.2,224.7 725.0,220.2 725.7,225.9 726.5,223.8 727.2,225.4 728.0,226.0 728.7,224.5 729.5,225.5 730.2,225.2 731.0,223.9 731.7,222.5 732.5,225.0 733.2,225.1 734.0,223.0 734.7,224.3 735.5,225.4 736.2,225.7 737.0,223.3 737.7,224.8 738.5,222.0 739.2,225.9 740.0,225.5 740.7,224.1 741.5,225.7 742.2,225.6 743.0,224.5 743.7,219.4 744.5,224.0 745.2,224.2 746.0,224.8 746.7,221.1 747.5,225.3 748.2,226.1 749.0,225.7 749.7,222.5 750.5,224.4 751.2,225.1 752.0,222.5 752.7,224.8 753.5,221.2 754.2,224.0 755.0,225.5 755.7,224.3 756.5,223.1 757.2,224.8 758.0,226.0 758.7,225.2 759.5,225.6 760.2,223.8 761.0,225.4 761.7,225.4 762.5,224.3 763.2,223.6 764.0,224.2 764.7,224.8 765.5,225.2 766.2,225.4 767.0,224.4 767.7,225.8 768.5,224.9 769.2,225.4 770.0,225.6 770.7,226.0 771.5,225.0 772.2,225.7 773.0,226.0 773.7,225.6 774.5,225.6 775.2,225.9 776.0,222.2 776.7,223.5 777.5,223.3 778.2,220.9 779.0,225.5 779.7,223.3 780.5,222.9 781.2,225.0 782.0,225.6 782.7,224.5 783.5,225.3 784.2,225.8 785.0,223.9 785.7,224.4 786.5,225.6 787.2,221.3 788.0,221.0 788.7,225.8 789.5,224.4 790.2,224.9 791.0,225.4 791.7,219.6 792.5,225.3 793.2,225.1 794.0,224.5 794.7,225.4 795.5,223.3 796.2,225.1 797.0,224.6 797.7,224.5 798.5,224.9 799.2,225.8 800.0,225.8 L800.0,234.2 799.2,235.1 798.5,235.0 797.7,234.5 797.0,235.7 796.2,234.8 795.5,235.7 794.7,234.5 794.0,236.9 793.2,234.0 792.5,238.6 791.7,234.3 791.0,234.4 790.2,234.2 789.5,234.8 788.7,235.8 788.0,235.5 787.2,236.0 786.5,236.3 785.7,234.5 785.0,236.9 784.2,236.1 783.5,235.6 782.7,234.8 782.0,234.6 781.2,235.2 780.5,236.0 779.7,237.5 779.0,234.3 778.2,235.7 777.5,235.2 776.7,236.9 776.0,234.6 775.2,234.0 774.5,234.3 773.7,235.1 773.0,234.2 772.2,235.3 771.5,235.2 770.7,234.9 770.0,234.3 769.2,234.4 768.5,234.5 767.7,234.5 767.0,235.2 766.2,235.9 765.5,234.9 764.7,234.6 764.0,235.0 763.2,235.7 762.5,235.0 761.7,234.4 761.0,234.5 760.2,233.9 759.5,237.9 758.7,236.0 758.0,235.2 757.2,237.7 756.5,234.8 755.7,237.2 755.0,236.9 754.2,234.5 753.5,235.8 752.7,234.1 752.0,234.8 751.2,235.2 750.5,237.4 749.7,234.9 749.0,235.4 748.2,234.4 747.5,237.7 746.7,234.5 746.0,234.3 745.2,234.8 744.5,236.8 743.7,238.2 743.0,234.0 742.2,235.2 741.5,235.4 740.7,237.8 740.0,236.9 739.2,235.8 738.5,235.1 737.7,234.1 737.0,235.3 736.2,236.8 735.5,238.2 734.7,237.6 734.0,234.1 733.2,238.1 732.5,235.8 731.7,234.1 731.0,234.8 730.2,234.4 729.5,237.3 728.7,235.9 728.0,235.5 727.2,235.2 726.5,236.5 725.7,235.5 725.0,234.0 724.2,233.9 723.5,234.3 722.7,236.4 722.0,235.2 721.2,234.8 720.5,235.6 719.7,234.7 719.0,234.2 718.2,239.4 717.5,237.2 716.7,234.7 716.0,234.9 715.2,236.4 714.5,235.6 713.7,236.9 713.0,236.1 712.2,234.1 711.5,235.2 710.7,234.2 710.0,234.6 709.2,234.1 708.5,234.4 707.7,234.0 707.0,234.5 706.2,237.4 705.5,234.5 704.7,234.1 704.0,235.5 703.2,234.9 702.5,234.6 701.7,236.1 701.0,235.5 700.2,234.1 699.5,236.0 698.7,235.7 698.0,235.4 697.2,235.4 696.5,234.0 695.7,235.0 695.0,233.9 694.2,234.9 693.5,237.6 692.7,235.1 692.0,234.4 691.2,235.0 690.5,235.4 689.7,234.9 689.0,234.4 688.2,235.4 687.5,236.5 686.7,234.5 686.0,234.6 685.2,234.0 684.5,236.0 683.7,235.1 683.0,236.9 682.2,234.7 681.5,234.8 680.7,234.5 680.0,235.1 679.2,237.6 678.5,234.5 677.7,238.1 677.0,235.9 676.2,235.2 675.5,234.4 674.7,234.4 674.0,234.1 673.2,235.0 672.5,236.1 671.7,235.9 671.0,234.7 670.2,234.1 669.5,236.8 668.7,234.2 668.0,234.6 667.2,235.7 666.5,235.4 665.7,234.2 665.0,238.1 664.2,234.2 663.5,234.7 662.7,235.6 662.0,235.1 661.2,234.9 660.5,234.1 659.7,234.1 659.0,234.2 658.2,234.9 657.5,234.3 656.7,235.2 656.0,236.7 655.2,235.1 654.5,236.6 653.7,235.2 653.0,239.7 652.2,236.5 651.5,234.8 650.7,235.5 650.0,235.1 649.2,234.6 648.5,234.2 647.7,235.0 647.0,234.5 646.2,236.2 645.5,234.6 644.7,234.0 643.9,234.7 643.2,235.9 642.4,234.5 641.7,235.4 640.9,234.3 640.2,238.3 639.4,235.2 638.7,233.9 637.9,235.7 637.2,235.9 636.4,234.0 635.7,235.6 634.9,235.7 634.2,235.1 633.4,236.3 632.7,234.2 631.9,236.6 631.2,235.8 630.4,234.1 629.7,234.1 628.9,236.3 628.2,235.2 627.4,237.3 626.7,235.9 625.9,234.3 625.2,234.3 624.4,234.3 623.7,234.5 622.9,234.3 622.2,234.3 621.4,236.4 620.7,234.7 619.9,236.7 619.2,239.8 618.4,235.2 617.7,234.0 616.9,234.0 616.2,234.2 615.4,235.7 614.7,235.3 613.9,235.0 613.2,236.0 612.4,234.7 611.7,234.2 610.9,235.7 610.2,235.1 609.4,234.3 608.7,236.1 607.9,235.1 607.2,235.0 606.4,235.7 605.7,234.9 604.9,235.5 604.2,235.0 603.4,235.3 602.7,235.1 601.9,234.8 601.2,234.3 600.4,234.1 599.7,235.1 598.9,234.5 598.2,235.3 597.4,237.0 596.7,234.8 595.9,235.5 595.2,235.9 594.4,234.0 593.7,234.0 592.9,235.3 592.2,236.3 591.4,235.5 590.7,238.0 589.9,234.7 589.2,236.4 588.4,234.7 587.7,235.8 586.9,234.1 586.2,234.9 585.4,239.8 584.7,236.2 583.9,237.6 583.2,234.8 582.4,235.3 581.7,234.0 580.9,234.7 580.2,236.9 579.4,236.5 578.7,234.1 577.9,236.8 577.2,234.8 576.4,234.8 575.7,233.9 574.9,234.7 574.2,235.4 573.4,234.5 572.7,239.6 571.9,237.3 571.2,234.5 570.4,237.2 569.7,234.2 568.9,234.6 568.2,235.1 567.4,235.1 566.7,234.2 565.9,234.1 565.2,235.5 564.4,234.9 563.7,236.1 562.9,235.2 562.2,235.2 561.4,234.2 560.7,234.4 559.9,237.0 559.2,234.5 558.4,234.5 557.7,234.4 556.9,234.6 556.2,234.3 555.4,234.1 554.7,236.5 553.9,235.4 553.2,237.4 552.4,234.2 551.7,234.7 550.9,234.6 550.2,234.3 549.4,234.3 548.7,235.7 547.9,236.0 547.2,235.8 546.4,236.2 545.7,234.0 544.9,234.9 544.2,235.6 543.4,235.9 542.7,234.8 541.9,234.1 541.2,235.9 540.4,234.2 539.7,236.6 538.9,235.3 538.2,234.8 537.4,234.1 536.7,234.6 535.9,237.6 535.2,236.4 534.4,235.5 533.7,234.0 532.9,237.7 532.2,236.0 531.4,235.0 530.7,234.0 529.9,234.9 529.2,237.1 528.4,234.8 527.7,235.2 526.9,234.7 526.2,233.9 525.4,235.5 524.7,235.6 523.9,234.1 523.2,234.0 522.4,236.5 521.7,239.0 520.9,234.4 520.2,241.2 519.4,234.0 518.7,235.5 517.9,234.9 517.2,235.0 516.4,235.1 515.7,235.6 514.9,235.4 514.2,237.7 513.4,235.0 512.7,237.6 511.9,234.1 511.2,235.0 510.4,235.0 509.7,235.1 508.9,235.4 508.2,234.4 507.4,234.8 506.7,234.5 505.9,236.7 505.2,234.6 504.4,234.2 503.7,238.5 502.9,234.7 502.2,235.1 501.4,235.4 500.7,234.4 499.9,236.2 499.2,235.8 498.4,234.7 497.7,235.1 496.9,234.8 496.2,234.6 495.4,235.5 494.7,234.5 493.9,234.0 493.2,235.4 492.4,234.0 491.7,238.2 490.9,234.4 490.2,237.1 489.4,237.2 488.7,238.0 487.9,236.7 487.1,234.8 486.4,234.2 485.6,234.9 484.9,234.0 484.1,234.4 483.4,234.9 482.6,234.7 481.9,236.1 481.1,235.0 480.4,236.0 479.6,235.2 478.9,235.0 478.1,234.1 477.4,234.5 476.6,234.8 475.9,234.2 475.1,233.9 474.4,233.9 473.6,234.0 472.9,234.7 472.1,234.3 471.4,234.7 470.6,235.1 469.9,235.0 469.1,236.1 468.4,233.9 467.6,236.1 466.9,235.3 466.1,238.2 465.4,234.3 464.6,237.4 463.9,235.3 463.1,236.0 462.4,234.2 461.6,235.0 460.9,237.0 460.1,234.4 459.4,234.4 458.6,234.1 457.9,236.2 457.1,234.3 456.4,238.4 455.6,237.8 454.9,234.9 454.1,235.0 453.4,236.0 452.6,235.5 451.9,234.3 451.1,235.0 450.4,234.0 449.6,235.1 448.9,238.5 448.1,235.5 447.4,234.6 446.6,235.8 445.9,234.2 445.1,235.9 444.4,236.0 443.6,234.6 442.9,234.1 442.1,236.4 441.4,235.4 440.6,239.1 439.9,236.0 439.1,235.4 438.4,234.8 437.6,234.5 436.9,235.6 436.1,236.7 435.4,234.9 434.6,234.0 433.9,235.2 433.1,235.5 432.4,234.8 431.6,234.0 430.9,234.7 430.1,234.4 429.4,235.5 428.6,235.2 427.9,235.7 427.1,234.0 426.4,234.8 425.6,235.8 424.9,234.2 424.1,235.7 423.4,237.8 422.6,234.1 421.9,237.7 421.1,235.8 420.4,234.0 419.6,234.7 418.9,235.0 418.1,234.4 417.4,234.9 416.6,234.2 415.9,234.9 415.1,236.6 414.4,236.9 413.6,234.0 412.9,235.1 412.1,235.2 411.4,234.9 410.6,234.3 409.9,235.0 409.1,234.6 408.4,235.3 407.6,237.5 406.9,235.7 406.1,234.7 405.4,235.5 404.6,235.1 403.9,237.0 403.1,237.3 402.4,235.4 401.6,234.6 400.9,236.7 400.1,235.5 399.4,234.0 398.6,234.9 397.9,236.3 397.1,234.9 396.4,234.6 395.6,234.9 394.9,236.0 394.1,235.3 393.4,234.1 392.6,235.2 391.9,241.8 391.1,235.4 390.4,236.2 389.6,234.0 388.9,235.5 388.1,234.5 387.4,236.0 386.6,234.8 385.9,234.9 385.1,235.5 384.4,235.2 383.6,235.1 382.9,234.4 382.1,234.4 381.4,234.4 380.6,235.5 379.9,235.4 379.1,234.7 378.4,234.3 377.6,236.4 376.9,235.3 376.1,235.5 375.4,234.9 374.6,234.8 373.9,234.2 373.1,240.6 372.4,234.2 371.6,235.6 370.9,234.9 370.1,234.0 369.4,234.1 368.6,234.8 367.9,238.5 367.1,234.9 366.4,236.1 365.6,235.0 364.9,234.9 364.1,234.0 363.4,234.2 362.6,234.0 361.9,234.9 361.1,234.2 360.4,237.1 359.6,235.0 358.9,236.2 358.1,234.0 357.4,237.5 356.6,236.0 355.9,236.3 355.1,237.1 354.4,234.5 353.6,235.5 352.9,233.9 352.1,236.0 351.4,234.0 350.6,234.0 349.9,236.0 349.1,236.5 348.4,234.9 347.6,234.8 346.9,234.3 346.1,235.4 345.4,234.3 344.6,234.1 343.9,234.1 343.1,234.5 342.4,234.3 341.6,234.6 340.9,235.4 340.1,234.6 339.4,235.7 338.6,235.1 337.9,235.3 337.1,234.2 336.4,235.9 335.6,236.9 334.9,234.4 334.1,234.1 333.4,235.2 332.6,234.7 331.8,234.6 331.1,235.3 330.3,234.7 329.6,236.1 328.8,234.1 328.1,234.1 327.3,237.3 326.6,235.6 325.8,235.3 325.1,234.1 324.3,236.1 323.6,236.6 322.8,235.0 322.1,235.3 321.3,234.2 320.6,234.8 319.8,234.6 319.1,235.3 318.3,235.4 317.6,234.2 316.8,235.2 316.1,235.0 315.3,234.9 314.6,236.5 313.8,234.3 313.1,234.2 312.3,234.9 311.6,235.5 310.8,235.0 310.1,234.0 309.3,235.3 308.6,234.4 307.8,234.3 307.1,234.0 306.3,234.3 305.6,234.6 304.8,234.4 304.1,235.7 303.3,237.4 302.6,234.1 301.8,234.2 301.1,234.7 300.3,234.6 299.6,234.4 298.8,234.5 298.1,234.1 297.3,235.2 296.6,234.3 295.8,235.7 295.1,234.9 294.3,234.8 293.6,235.6 292.8,234.2 292.1,235.7 291.3,235.6 290.6,234.9 289.8,233.9 289.1,235.3 288.3,233.9 287.6,234.2 286.8,235.0 286.1,236.4 285.3,234.4 284.6,234.5 283.8,235.9 283.1,236.9 282.3,235.1 281.6,235.2 280.8,234.8 280.1,236.0 279.3,234.5 278.6,238.8 277.8,235.1 277.1,236.6 276.3,233.9 275.6,234.0 274.8,236.4 274.1,236.9 273.3,234.1 272.6,235.4 271.8,234.1 271.1,235.2 270.3,235.1 269.6,233.9 268.8,238.2 268.1,235.7 267.3,235.1 266.6,234.3 265.8,234.5 265.1,234.1 264.3,233.9 263.6,234.2 262.8,235.1 262.1,235.2 261.3,234.6 260.6,234.2 259.8,234.6 259.1,236.2 258.3,235.5 257.6,235.4 256.8,234.8 256.1,238.3 255.3,234.4 254.6,235.4 253.8,235.0 253.1,234.0 252.3,235.2 251.6,235.9 250.8,234.2 250.1,234.1 249.3,235.1 248.6,236.8 247.8,239.2 247.1,237.0 246.3,234.4 245.6,240.3 244.8,234.5 244.1,234.9 243.3,234.6 242.6,234.7 241.8,234.0 241.1,233.9 240.3,234.9 239.6,234.4 238.8,234.0 238.1,238.0 237.3,235.5 236.6,237.7 235.8,234.0 235.1,235.1 234.3,234.0 233.6,235.3 232.8,234.5 232.1,235.5 231.3,238.4 230.6,236.2 229.8,234.8 229.1,235.1 228.3,234.8 227.6,235.1 226.8,235.2 226.1,234.8 225.3,234.0 224.6,234.9 223.8,234.1 223.1,234.8 222.3,234.5 221.6,234.4 220.8,234.4 220.1,236.1 219.3,235.6 218.6,235.5 217.8,234.8 217.1,234.6 216.3,234.5 215.6,234.4 214.8,233.9 214.1,234.1 213.3,237.2 212.6,236.7 211.8,236.7 211.1,235.7 210.3,234.1 209.6,238.1 208.8,235.0 208.1,234.9 207.3,234.3 206.6,234.6 205.8,234.0 205.1,235.5 204.3,238.3 203.6,235.7 202.8,234.8 202.1,235.4 201.3,234.8 200.6,237.5 199.8,234.4 199.1,236.0 198.3,234.3 197.6,236.3 196.8,234.4 196.1,236.4 195.3,235.7 194.6,236.9 193.8,234.0 193.1,237.0 192.3,234.2 191.6,234.9 190.8,235.7 190.1,234.2 189.3,234.5 188.6,236.0 187.8,234.4 187.1,234.7 186.3,238.8 185.6,234.9 184.8,234.7 184.1,234.9 183.3,235.1 182.6,235.1 181.8,234.7 181.1,235.2 180.3,234.4 179.6,234.9 178.8,236.0 178.1,234.4 177.3,236.2 176.6,234.5 175.8,235.5 175.0,234.6 174.3,235.5 173.5,235.4 172.8,234.4 172.0,235.6 171.3,234.2 170.5,235.8 169.8,235.0 169.0,235.5 168.3,234.9 167.5,235.4 166.8,235.4 166.0,234.9 165.3,235.0 164.5,236.0 163.8,235.8 163.0,234.6 162.3,234.0 161.5,235.1 160.8,234.2 160.0,235.0 159.3,234.2 158.5,234.3 157.8,234.7 157.0,234.4 156.3,234.4 155.5,235.3 154.8,235.2 154.0,235.8 153.3,234.1 152.5,234.1 151.8,234.3 151.0,234.8 150.3,234.7 149.5,234.2 148.8,238.0 148.0,234.3 147.3,235.8 146.5,234.3 145.8,234.9 145.0,234.3 144.3,235.3 143.5,234.2 142.8,236.2 142.0,237.7 141.3,235.4 140.5,234.6 139.8,235.4 139.0,233.9 138.3,234.4 137.5,236.3 136.8,235.6 136.0,236.4 135.3,237.0 134.5,234.0 133.8,234.9 133.0,236.0 132.3,235.3 131.5,235.3 130.8,234.6 130.0,234.0 129.3,234.2 128.5,234.5 127.8,234.2 127.0,236.5 126.3,236.0 125.5,234.2 124.8,233.9 124.0,235.0 123.3,236.7 122.5,234.1 121.8,237.6 121.0,234.5 120.3,234.7 119.5,238.8 118.8,235.0 118.0,236.4 117.3,235.7 116.5,235.2 115.8,234.7 115.0,234.9 114.3,235.5 113.5,235.1 112.8,234.4 112.0,235.0 111.3,234.0 110.5,234.2 109.8,234.7 109.0,236.7 108.3,234.0 107.5,234.7 106.8,234.6 106.0,234.5 105.3,234.0 104.5,234.1 103.8,235.6 103.0,234.2 102.3,234.5 101.5,235.2 100.8,234.3 100.0,236.1 99.3,234.4 98.5,234.4 97.8,236.5 97.0,237.4 96.3,237.2 95.5,235.5 94.8,234.7 94.0,235.4 93.3,234.5 92.5,236.2 91.8,235.6 91.0,236.1 90.3,234.4 89.5,235.1 88.8,236.1 88.0,234.6 87.3,236.8 86.5,235.4 85.8,235.7 85.0,236.5 84.3,236.9 83.5,237.2 82.8,234.6 82.0,234.7 81.3,234.0 80.5,236.2 79.8,234.5 79.0,234.1 78.3,237.3 77.5,235.1 76.8,234.9 76.0,236.9 75.3,236.2 74.5,234.6 73.8,234.8 73.0,235.0 72.3,235.7 71.5,235.2 70.8,234.7 70.0,234.0 69.3,236.0 68.5,236.1 67.8,234.3 67.0,234.4 66.3,235.7 65.5,235.4 64.8,234.9 64.0,235.1 63.3,235.3 62.5,235.0 61.8,235.6 61.0,236.3 60.3,236.9 59.5,233.9 58.8,234.2 58.0,234.0 57.3,234.2 56.5,237.2 55.8,236.4 55.0,234.2 54.3,234.2 53.5,234.0 52.8,237.0 52.0,234.9 51.3,235.9 50.5,235.6 49.8,236.1 49.0,234.1 48.3,235.2 47.5,234.2 46.8,234.8 46.0,236.4 45.3,235.2 44.5,234.9 43.8,235.8 43.0,234.4 42.3,236.3 41.5,236.4 40.8,235.6 40.0,236.6 39.3,237.6 38.5,234.9 37.8,239.1 37.0,235.5 36.3,234.2 35.5,236.5 34.8,235.0 34.0,234.2 33.3,234.7 32.5,233.9 31.8,235.0 31.0,234.9 30.3,234.8 29.5,234.0 28.8,234.2 28.0,235.2 27.3,234.9 26.5,234.2 25.8,234.0 25.0,237.0 24.3,234.9 23.5,235.3 22.8,234.5 22.0,235.4 21.3,234.3 20.5,234.4z" fill="#0f0" stroke="#0f0" stroke-width="0.5" stroke-linejoin="round"/><path d="M37.7,230.0V199.4M36.9,230.0V269.2M38.9,230.0V220.0M35.5,230.0V242.0M38.5,230.0V241.0M96.9,230.0V199.4M96.1,230.0V271.2M98.1,230.0V220.0M94.7,230.0V242.0M97.7,230.0V241.0M156.4,230.0V200M155.6,230.0V271M157.6,230.0V220.0M154.2,230.0V242.0M157.2,230.0V241.0M215.2,230.0V198M214.4,230.0V267.5M216.4,230.0V220.0M213.0,230.0V242.0M216.0,230.0V241.0M273.1,230.0V200M272.3,230.0V267M274.3,230.0V220.0M270.9,230.0V242.0M273.9,230.0V241.0M331.4,230.0V198M330.6,230.0V274.4M332.6,230.0V220.0M329.2,230.0V242.0M332.2,230.0V241.0M390.2,230.0V200M389.4,230.0V274.4M391.4,230.0V220.0M388.0,230.0V242.0M391.0,230.0V241.0M450.6,230.0V200M449.8,230.0V269M451.8,230.0V220.0M448.4,230.0V242.0M451.4,230.0V241.0M510.0,230.0V200M509.2,230.0V271M511.2,230.0V220.0M507.8,230.0V242.0M510.8,230.0V241.0M569.8,230.0V203M569.0,230.0V269M571.0,230.0V220.0M567.6,230.0V242.0M570.6,230.0V241.0M628.1,230.0V203.5M627.3,230.0V271M629.3,230.0V220.0M625.9,230.0V242.0M628.9,230.0V241.0M686.4,230.0V200M685.6,230.0V271M687.6,230.0V220.0M684.2,230.0V242.0M687.2,230.0V241.0M745.2,230.0V200M744.4,230.0V274.4M746.4,230.0V220.0M743.0,230.0V242.0M746.0,230.0V241.0M116.1,230.0V218M115.5,230.0V255.5M117.3,230.0V221.0M117.0,230.0V239.0M174.5,230.0V220M173.9,230.0V243M175.7,230.0V221.0M175.4,230.0V239.0M233.2,230.0V217M232.6,230.0V246M234.4,230.0V221.0M234.1,230.0V239.0M292.2,230.0V214M291.6,230.0V246M293.4,230.0V221.0M293.1,230.0V239.0M349.9,230.0V212M349.3,230.0V248M351.1,230.0V221.0M350.8,230.0V239.0M409.9,230.0V217M409.3,230.0V252M411.1,230.0V221.0M410.8,230.0V239.0M469.7,230.0V212M469.1,230.0V246M470.9,230.0V221.0M470.6,230.0V239.0M529.7,230.0V214.6M529.1,230.0V246M530.9,230.0V221.0M530.6,230.0V239.0M588.6,230.0V218M588.0,230.0V240M589.8,230.0V221.0M589.5,230.0V239.0M646.8,230.0V218M646.2,230.0V250.4M648.0,230.0V221.0M647.7,230.0V239.0M705.1,230.0V217M704.5,230.0V246M706.3,230.0V221.0M706.0,230.0V239.0M764.5,230.0V221M763.9,230.0V241M765.7,230.0V221.0M765.4,230.0V239.0M796.8,230.0V220M796.2,230.0V239M798.0,230.0V221.0M797.7,230.0V239.0M56.3,230.0V221M55.7,230.0V240M57.5,230.0V221.0M57.2,230.0V239.0" stroke="#0f0" stroke-width="1.3" fill="none"/><path d="M4.3,236.8h8.6l4.4,4.1l-4.4,4.1h-8.6z" fill="#1fe61f" stroke="#0a5a0a" stroke-width=".6"/><path d="M815.9,237.2h-8.2l-4.8,3.9l4.8,3.9h8.2z" fill="#1fe61f" stroke="#0a5a0a" stroke-width=".6"/><path d="M406.3,78.6h7.6v5.5l-3.8,4.2l-3.8,-4.2z" fill="#f0a040"/><path d="M408,80.7h4.2M410.1,80.7v4.6" stroke="#402000" stroke-width="1.1" fill="none"/></svg>
<div class="t" style="left:7.60px;top:230.90px;font-size:8px;color:#083808;font-weight:bold;">1</div>
<div class="t" style="left:809.60px;top:231.20px;font-size:6.6px;color:#083808;font-weight:bold;">T</div>
<div class="t" style="left:116.00px;top:614.90px;font-size:9.2px;color:#24d024;transform:scaleX(1.0011);">CH1:Vamp = 8.75mV</div>
<div class="t" style="left:116.00px;top:650.90px;font-size:9.2px;color:#24d024;transform:scaleX(0.9967);">CH1:Vrms = 1.63mV</div>
<div class="t" style="left:507.40px;top:650.90px;font-size:9.2px;color:#24d024;transform:scaleX(0.9922);">CH1:Frequ = 204kHz</div>
<div style="position:absolute;left:815.90px;top:54.40px;width:5.10px;height:673.00px;background:linear-gradient(90deg,#fff 0,#fdfdfd 45%,#f5f5f5 55%,#f2f2f2 100%);"></div>
<div style="position:absolute;left:821.70px;top:61.00px;width:135.00px;height:74.60px;border:1px solid #dfdfdf;box-sizing:border-box;border-radius:2px;box-shadow:inset 1px 1px 0 #fafafa, 1px 1px 0 #fafafa;"></div>
<div style="position:absolute;left:869.30px;top:57.00px;width:40.00px;height:9.00px;background:#f0f0f0;"></div>
<div class="t" style="left:871.30px;top:50.70px;font-size:8.4px;color:#111;transform:scaleX(0.9519);">Horizontal</div>
<div class="t" style="left:828.40px;top:62.90px;font-size:8.3px;color:#111;transform:scaleX(0.9000);">Time / DIV</div>
<div style="position:absolute;left:826.40px;top:79.30px;width:47.20px;height:16.30px;border:1px solid #8e8e8e;background:linear-gradient(#f4f4f4 0%,#ececec 48%,#dedede 52%,#d0d0d0 100%);border-radius:2.5px;box-sizing:border-box;box-shadow:inset 0 0 0 1px rgba(255,255,255,.7);"></div>
<div class="t" style="left:830.00px;top:77.65px;font-size:8.3px;color:#111;">20.0us</div>
<svg style="position:absolute;left:864.10px;top:86.25px" width="6" height="4" viewBox="0 0 6 4"><path d="M0.2,0.3h5.4l-2.7,3.2z" fill="#111"/></svg>
<div class="t" style="left:829.00px;top:98.10px;font-size:8.3px;color:#111;transform:scaleX(0.9282);">Format</div>
<div style="position:absolute;left:826.40px;top:114.10px;width:47.20px;height:16.30px;border:1px solid #8e8e8e;background:linear-gradient(#f4f4f4 0%,#ececec 48%,#dedede 52%,#d0d0d0 100%);border-radius:2.5px;box-sizing:border-box;box-shadow:inset 0 0 0 1px rgba(255,255,255,.7);"></div>
<div class="t" style="left:830.00px;top:112.45px;font-size:8.3px;color:#111;">Y - T</div>
<svg style="position:absolute;left:864.10px;top:121.05px" width="6" height="4" viewBox="0 0 6 4"><path d="M0.2,0.3h5.4l-2.7,3.2z" fill="#111"/></svg>
<svg style="position:absolute;left:885.50px;top:67.30px" width="64" height="64" viewBox="885.50 67.30 64 64"><ellipse cx="917.5" cy="99.3" rx="28.1" ry="25.9" fill="#ececec" stroke="#505050" stroke-width="0.9"/><ellipse cx="917.5" cy="99.3" rx="25.6" ry="24.0" fill="#b6b6b6"/><path d="M917.5,99.3L899.40,116.27A25.6,24.0 0 1 1 936.37,83.09z" fill="#d9d9d9"/><ellipse cx="917.5" cy="99.3" rx="25.6" ry="24.0" fill="none" stroke="#444" stroke-width="0.9"/><path d="M932.10,86.10L936.37,83.09" stroke="#555" stroke-width="1"/><path d="M901.10,116.50l-7,6.9M935.50,117.70l5.5,5.2" stroke="#222" stroke-width="1.1" fill="none"/><ellipse cx="917.65" cy="100.40" rx="21.3" ry="20.6" fill="#3232fc" stroke="#333" stroke-width="0.9"/><path d="M921.5,98.3L932.9,92.3" stroke="#f2f2f2" stroke-width="1.4" stroke-linecap="round"/></svg>
<div style="position:absolute;left:821.70px;top:145.80px;width:135.00px;height:165.00px;border:1px solid #dfdfdf;box-sizing:border-box;border-radius:2px;box-shadow:inset 1px 1px 0 #fafafa, 1px 1px 0 #fafafa;"></div>
<div style="position:absolute;left:874.15px;top:141.80px;width:30.50px;height:9.00px;background:#f0f0f0;"></div>
<div class="t" style="left:876.15px;top:135.50px;font-size:8.4px;color:#111;transform:scaleX(0.9620);">Vertical</div>
<div style="position:absolute;left:826.30px;top:154.90px;width:9.60px;height:9.40px;border:1px solid #8e8f8f;box-sizing:border-box;background:linear-gradient(135deg,#dcdfe3,#f8f8f8);box-shadow:inset 0 0 0 1px #f4f4f4;"></div>
<svg style="position:absolute;left:826.3px;top:154.9px" width="10" height="10" viewBox="0 0 10 10"><path d="M2.4,4.6l1.9,2.8l3.2,-5.6" stroke="#3a4aa0" stroke-width="1.4" fill="none"/></svg>
<div class="t" style="left:838.60px;top:149.70px;font-size:8.4px;color:#111;transform:scaleX(0.8450);">CH1</div>
<div style="position:absolute;left:826.40px;top:168.20px;width:45.40px;height:16.00px;border:1px solid #8e8e8e;background:linear-gradient(#f4f4f4 0%,#ececec 48%,#dedede 52%,#d0d0d0 100%);border-radius:2.5px;box-sizing:border-box;box-shadow:inset 0 0 0 1px rgba(255,255,255,.7);"></div>
<div class="t" style="left:830.00px;top:166.40px;font-size:8.3px;color:#111;width:26px;overflow:hidden;">10.0mV</div>
<svg style="position:absolute;left:862.30px;top:175.00px" width="6" height="4" viewBox="0 0 6 4"><path d="M0.2,0.3h5.4l-2.7,3.2z" fill="#111"/></svg>
<div style="position:absolute;left:829.00px;top:170.50px;width:27.80px;height:11.40px;border:1px solid #8c8c8c;box-sizing:border-box;background:rgba(255,255,255,.25);"></div>
<div style="position:absolute;left:826.40px;top:189.40px;width:45.40px;height:16.00px;border:1px solid #8e8e8e;background:linear-gradient(#f4f4f4 0%,#ececec 48%,#dedede 52%,#d0d0d0 100%);border-radius:2.5px;box-sizing:border-box;box-shadow:inset 0 0 0 1px rgba(255,255,255,.7);"></div>
<div class="t" style="left:830.00px;top:187.60px;font-size:8.3px;color:#111;">AC</div>
<svg style="position:absolute;left:862.30px;top:196.20px" width="6" height="4" viewBox="0 0 6 4"><path d="M0.2,0.3h5.4l-2.7,3.2z" fill="#111"/></svg>
<div style="position:absolute;left:826.40px;top:210.40px;width:45.40px;height:16.00px;border:1px solid #8e8e8e;background:linear-gradient(#f4f4f4 0%,#ececec 48%,#dedede 52%,#d0d0d0 100%);border-radius:2.5px;box-sizing:border-box;box-shadow:inset 0 0 0 1px rgba(255,255,255,.7);"></div>
<div class="t" style="left:830.00px;top:208.60px;font-size:8.3px;color:#111;">x 1</div>
<svg style="position:absolute;left:862.30px;top:217.20px" width="6" height="4" viewBox="0 0 6 4"><path d="M0.2,0.3h5.4l-2.7,3.2z" fill="#111"/></svg>
<svg style="position:absolute;left:885.50px;top:161.90px" width="64" height="64" viewBox="885.50 161.90 64 64"><ellipse cx="917.5" cy="193.9" rx="28.1" ry="25.9" fill="#ececec" stroke="#505050" stroke-width="0.9"/><ellipse cx="917.5" cy="193.9" rx="25.6" ry="24.0" fill="#b6b6b6"/><path d="M917.5,193.9L899.40,210.87A25.6,24.0 0 1 1 936.37,177.69z" fill="#d9d9d9"/><ellipse cx="917.5" cy="193.9" rx="25.6" ry="24.0" fill="none" stroke="#444" stroke-width="0.9"/><path d="M932.10,180.70L936.37,177.69" stroke="#555" stroke-width="1"/><path d="M901.10,211.10l-7,6.9M935.50,212.30l5.5,5.2" stroke="#222" stroke-width="1.1" fill="none"/><ellipse cx="917.65" cy="195.00" rx="21.3" ry="20.6" fill="#10f010" stroke="#333" stroke-width="0.9"/><path d="M920.6,198.8L927.7,208.2" stroke="#f2f2f2" stroke-width="1.4" stroke-linecap="round"/></svg>
<div style="position:absolute;left:826.30px;top:235.00px;width:9.60px;height:9.40px;border:1px solid #8e8f8f;box-sizing:border-box;background:linear-gradient(135deg,#dcdfe3,#f8f8f8);box-shadow:inset 0 0 0 1px #f4f4f4;"></div>
<div class="t" style="left:838.20px;top:230.10px;font-size:8.4px;color:#111;transform:scaleX(0.8569);">CH2</div>
<div style="position:absolute;left:826.40px;top:247.70px;width:44.40px;height:15.80px;border:1px solid #b9b9b9;background:#f4f4f4;border-radius:2.5px;box-sizing:border-box;"></div>
<div class="t" style="left:830.00px;top:245.80px;font-size:8.3px;color:#8a8a8a;">500mV</div>
<svg style="position:absolute;left:861.30px;top:254.40px" width="6" height="4" viewBox="0 0 6 4"><path d="M0.2,0.3h5.4l-2.7,3.2z" fill="#9a9a9a"/></svg>
<div style="position:absolute;left:826.40px;top:268.70px;width:44.40px;height:15.80px;border:1px solid #b9b9b9;background:#f4f4f4;border-radius:2.5px;box-sizing:border-box;"></div>
<div class="t" style="left:830.00px;top:266.80px;font-size:8.3px;color:#8a8a8a;">AC</div>
<svg style="position:absolute;left:861.30px;top:275.40px" width="6" height="4" viewBox="0 0 6 4"><path d="M0.2,0.3h5.4l-2.7,3.2z" fill="#9a9a9a"/></svg>
<div style="position:absolute;left:826.40px;top:289.80px;width:44.40px;height:15.80px;border:1px solid #b9b9b9;background:#f4f4f4;border-radius:2.5px;box-sizing:border-box;"></div>
<div class="t" style="left:830.00px;top:287.90px;font-size:8.3px;color:#8a8a8a;">x 1</div>
<svg style="position:absolute;left:861.30px;top:296.50px" width="6" height="4" viewBox="0 0 6 4"><path d="M0.2,0.3h5.4l-2.7,3.2z" fill="#9a9a9a"/></svg>
<svg style="position:absolute;left:885.50px;top:240.70px" width="64" height="64" viewBox="885.50 240.70 64 64"><ellipse cx="917.5" cy="272.7" rx="28.1" ry="25.9" fill="#ececec" stroke="#505050" stroke-width="0.9"/><ellipse cx="917.5" cy="272.7" rx="25.6" ry="24.0" fill="#b6b6b6"/><path d="M917.5,272.7L899.40,289.67A25.6,24.0 0 1 1 936.37,256.49z" fill="#d9d9d9"/><ellipse cx="917.5" cy="272.7" rx="25.6" ry="24.0" fill="none" stroke="#444" stroke-width="0.9"/><path d="M932.10,259.50L936.37,256.49" stroke="#555" stroke-width="1"/><path d="M901.10,289.90l-7,6.9M935.50,291.10l5.5,5.2" stroke="#222" stroke-width="1.1" fill="none"/><ellipse cx="917.65" cy="273.80" rx="21.3" ry="20.6" fill="#969696" stroke="#333" stroke-width="0.9"/><path d="M909.3,259.3L916,270.4" stroke="#f2f2f2" stroke-width="1.4" stroke-linecap="round"/></svg>
<div style="position:absolute;left:821.70px;top:321.00px;width:134.00px;height:102.60px;border:1px solid #dfdfdf;box-sizing:border-box;border-radius:2px;box-shadow:inset 1px 1px 0 #fafafa, 1px 1px 0 #fafafa;"></div>
<div style="position:absolute;left:874.50px;top:317.00px;width:29.00px;height:9.00px;background:#f0f0f0;"></div>
<div class="t" style="left:876.50px;top:310.70px;font-size:8.4px;color:#111;transform:scaleX(0.9507);">Trigger</div>
<div class="t" style="left:826.60px;top:332.20px;font-size:8.3px;color:#111;transform:scaleX(0.9663);">Trigger Mode</div>
<div style="position:absolute;left:896.30px;top:334.50px;width:46.40px;height:16.10px;border:1px solid #8e8e8e;background:linear-gradient(#f4f4f4 0%,#ececec 48%,#dedede 52%,#d0d0d0 100%);border-radius:2.5px;box-sizing:border-box;box-shadow:inset 0 0 0 1px rgba(255,255,255,.7);"></div>
<div class="t" style="left:899.90px;top:332.75px;font-size:8.3px;color:#111;">Edge</div>
<svg style="position:absolute;left:933.20px;top:341.35px" width="6" height="4" viewBox="0 0 6 4"><path d="M0.2,0.3h5.4l-2.7,3.2z" fill="#111"/></svg>
<div class="t" style="left:826.60px;top:354.70px;font-size:8.3px;color:#111;transform:scaleX(1.0006);">Trigger Sweep</div>
<div style="position:absolute;left:896.30px;top:357.40px;width:46.40px;height:16.10px;border:1px solid #8e8e8e;background:linear-gradient(#f4f4f4 0%,#ececec 48%,#dedede 52%,#d0d0d0 100%);border-radius:2.5px;box-sizing:border-box;box-shadow:inset 0 0 0 1px rgba(255,255,255,.7);"></div>
<div class="t" style="left:899.90px;top:355.65px;font-size:8.3px;color:#111;">Auto</div>
<svg style="position:absolute;left:933.20px;top:364.25px" width="6" height="4" viewBox="0 0 6 4"><path d="M0.2,0.3h5.4l-2.7,3.2z" fill="#111"/></svg>
<div class="t" style="left:826.60px;top:376.20px;font-size:8.3px;color:#111;transform:scaleX(0.9801);">Trigger Source</div>
<div style="position:absolute;left:896.30px;top:378.60px;width:46.40px;height:16.10px;border:1px solid #8e8e8e;background:linear-gradient(#f4f4f4 0%,#ececec 48%,#dedede 52%,#d0d0d0 100%);border-radius:2.5px;box-sizing:border-box;box-shadow:inset 0 0 0 1px rgba(255,255,255,.7);"></div>
<div class="t" style="left:899.90px;top:376.85px;font-size:8.3px;color:#111;">CH1</div>
<svg style="position:absolute;left:933.20px;top:385.45px" width="6" height="4" viewBox="0 0 6 4"><path d="M0.2,0.3h5.4l-2.7,3.2z" fill="#111"/></svg>
<div class="t" style="left:826.60px;top:398.70px;font-size:8.3px;color:#111;transform:scaleX(0.9653);">Trigger Slope</div>
<div style="position:absolute;left:896.30px;top:401.40px;width:46.40px;height:16.10px;border:1px solid #8e8e8e;background:linear-gradient(#f4f4f4 0%,#ececec 48%,#dedede 52%,#d0d0d0 100%);border-radius:2.5px;box-sizing:border-box;box-shadow:inset 0 0 0 1px rgba(255,255,255,.7);"></div>
<div class="t" style="left:899.90px;top:399.65px;font-size:8.3px;color:#111;">+</div>
<svg style="position:absolute;left:933.20px;top:408.25px" width="6" height="4" viewBox="0 0 6 4"><path d="M0.2,0.3h5.4l-2.7,3.2z" fill="#111"/></svg>
<div style="position:absolute;left:2.80px;top:727.40px;width:957.20px;height:4.00px;background:#f9f9f9;"></div>
<div style="position:absolute;left:0.00px;top:731.20px;width:960.00px;height:1.00px;background:#b4b4b4;"></div>
<div style="position:absolute;left:0.00px;top:732.20px;width:960.00px;height:12.70px;background:#f5f5f5;"></div>
<div style="position:absolute;left:879.40px;top:733.50px;width:1.00px;height:10.50px;background:#c4c4c4;"></div>
<div class="t" style="left:2.20px;top:729.20px;font-size:9.6px;color:#000;transform:scaleX(0.9303);">Connected</div>
<div class="t" style="left:881.60px;top:729.00px;font-size:9.2px;color:#000;transform:scaleX(0.9123);">03-04-2012  00:26</div>
<div style="position:absolute;left:0.00px;top:744.80px;width:960.00px;height:23.20px;background:linear-gradient(90deg,#1f246c 0%,#1d286e 22%,#1b3379 40%,#1c4088 52%,#2150a0 66%,#2458aa 80%,#2860b2 100%);"></div>
<div style="position:absolute;left:0.00px;top:744.80px;width:960.00px;height:23.20px;background:linear-gradient(180deg,rgba(255,255,255,.28) 0,rgba(255,255,255,.06) 2px,rgba(255,255,255,0) 50%,rgba(0,0,20,.12) 100%);"></div>
<svg style="position:absolute;left:4px;top:740px" width="34" height="28" viewBox="4 740 34 28">
<defs><radialGradient id="orb" cx="50%" cy="78%" r="80%"><stop offset="0" stop-color="#7fe0fa"/><stop offset=".35" stop-color="#3c98dc"/><stop offset=".7" stop-color="#2660b4"/><stop offset="1" stop-color="#1c3a84"/></radialGradient></defs>
<circle cx="20.2" cy="756.4" r="14.4" fill="#6aa0d8" opacity=".35"/>
<circle cx="20.2" cy="756.4" r="13.4" fill="url(#orb)" stroke="#a8c8ec" stroke-width=".9" stroke-opacity=".75"/>
<path d="M14.6,749.4q3,-1.5 5.4,-.1l-1,5.2q-2.5,-1.3 -5.5,.2z" fill="#ee5a2a"/>
<path d="M21.2,749.7q2.8,1.4 5.6,.1l-1.1,5.2q-2.8,1.2 -5.5,-.2z" fill="#86c83c"/>
<path d="M13.2,756.3q3,-1.5 5.5,-.1l-1,5.2q-2.6,-1.3 -5.6,.2z" fill="#3c9cf0"/>
<path d="M19.9,756.6q2.8,1.4 5.6,.1l-1.1,5.2q-2.8,1.2 -5.5,-.2z" fill="#f8c832"/>
</svg>
<svg style="position:absolute;left:40px;top:745px" width="460" height="23" viewBox="40 745 460 23"><text x="55.0" y="763" font-family="Liberation Sans, sans-serif" font-size="17.5" font-weight="bold" font-style="italic" fill="#3cb0f4" stroke="#3cb0f4" stroke-width=".5">e</text><path d="M55,761.4c-1.4,-4.6 6,-11.6 11.6,-10.4" stroke="#f0c83c" stroke-width="1.4" fill="none"/><g transform="translate(95.6,757) scale(.9) translate(-95.9,-756.4)"><path d="M89.6,750.6h4.6l1,1.4h6.6v9.6h-12.2z" fill="#e8d48a" stroke="#b49a44" stroke-width=".6"/><rect x="91.6" y="754.2" width="9.4" height="5.4" fill="#7ab4e0"/><path d="M89.6,761.6l1.2,-5h12l-1,5z" fill="#f4e6a8" opacity=".9"/></g><rect x="123.8" y="750.8" width="11.6" height="11.4" rx="1" fill="#b4c8e4" stroke="#dce8f6" stroke-width=".8"/><circle cx="129.8" cy="756.6" r="4.4" fill="#f09428"/><path d="M128.4,754.2l3.8,2.4l-3.8,2.4z" fill="#fff"/><path d="M158.3,750h9.4l1,1v11.4h-10.4z" fill="#2a50c8" stroke="#1a2a8a" stroke-width=".6"/><rect x="160.4" y="750.4" width="5.6" height="3.8" fill="#f0f0f8"/><rect x="159.6" y="757.4" width="7.8" height="4.6" fill="#e84a4a"/><circle cx="198.4" cy="756.8" r="5.6" fill="#1a9aa0" stroke="#c8e8e8" stroke-width=".8"/><circle cx="196.3" cy="756.8" r="1.7" fill="none" stroke="#fff" stroke-width="1.1"/><circle cx="200.5" cy="756.8" r="1.7" fill="none" stroke="#fff" stroke-width="1.1"/><g transform="translate(233.6,756.8) scale(.86) translate(-233.6,-756.8)"><circle cx="233.6" cy="756.8" r="6.2" fill="#e8c030"/><path d="M233.6,756.8l-5.4,-3.1a6.2,6.2 0 0 1 10.8,0z" fill="#dc4434"/><path d="M233.6,756.8l-5.4,-3.1a6.2,6.2 0 0 0 2.4,8.5z" fill="#3ca44c"/><path d="M228.2,753.7a6.2,6.2 0 0 1 10.8,0h-5.4z" fill="#dc4434"/><circle cx="233.6" cy="756.8" r="2.6" fill="#4a8af0" stroke="#f4f4f4" stroke-width=".9"/></g></svg>
<div style="position:absolute;left:251.80px;top:746.00px;width:118.60px;height:22.40px;border:1px solid #a9b3d0;border-bottom:none;border-radius:2.5px 2.5px 0 0;box-sizing:border-box;background:linear-gradient(180deg,#949fc1 0%,#7a88b2 42%,#6878a6 52%,#7482ae 80%,#8290ba 100%);box-shadow:inset 0 0 0 1px rgba(255,255,255,.18);"></div>
<div style="position:absolute;left:373.60px;top:746.00px;width:118.40px;height:22.40px;border:1px solid #6c7eb2;border-bottom:none;border-radius:2.5px 2.5px 0 0;box-sizing:border-box;background:linear-gradient(180deg,#50659f 0%,#364c8c 45%,#2c4384 55%,#3a5296 100%);box-shadow:inset 0 0 0 1px rgba(255,255,255,.10);"></div>
<svg style="position:absolute;left:259px;top:751px" width="13" height="12" viewBox="0 0 13 12"><rect width="13" height="12" fill="#0a1a0a"/><path d="M0,5.5l1.5,-3.5l1.8,5l1.8,-5l1.8,5l1.8,-5l1.8,5l1.5,-3.5" stroke="#e8d020" stroke-width="1" fill="none"/><path d="M0,9h13M0,10.8h13M3,7.6v4.4M6.5,7.6v4.4M10,7.6v4.4" stroke="#18a018" stroke-width="1"/></svg>
<div class="t" style="left:274.20px;top:747.00px;font-size:10px;color:#fff;transform:scaleX(0.8050);text-shadow:0 0 2px rgba(20,30,70,.8);">DSO-2150 USB(7.0.0.0)</div>
<svg style="position:absolute;left:379px;top:751px" width="13" height="12" viewBox="0 0 13 12"><path d="M1.5,8.5c0,-4 2.5,-6 5.5,-6s4.5,2 4.5,5s-2,3.5 -3.5,3.2l-1,-1.6l-1.4,1.8c-1.8,.6 -4.1,-.2 -4.1,-2.4z" fill="#e4e6ee" stroke="#6a7288" stroke-width=".7"/><circle cx="4.6" cy="6.2" r="1" fill="#334"/><circle cx="8.2" cy="5.8" r="1" fill="#334"/><path d="M11,1l-1,4" stroke="#f0a030" stroke-width="1.2"/></svg>
<div class="t" style="left:395.60px;top:747.00px;font-size:10px;color:#fff;transform:scaleX(0.8324);text-shadow:0 0 2px rgba(10,20,60,.8);">+15 SFTP CAT5e 47u...</div>
<div class="t" style="left:824.00px;top:744.60px;font-size:8.4px;color:#fff;transform:scaleX(0.9255);">EN</div>
<svg style="position:absolute;left:845px;top:746px" width="50" height="22" viewBox="845 746 50 22"><path d="M848,760.4h4.8l-2.4,-3z" fill="#fff"/><path d="M863.2,751.6v11" stroke="#fff" stroke-width="1.1"/><path d="M864,752.2h5.6l-.2,1.4h4.2l-1.4,4h-4l.2,-1.2h-4.4z" fill="#fff"/><path d="M881,755.4h2.2l3,-2.8v8.6l-3,-2.8h-2.2z" fill="#fff"/><path d="M888,754.4q1.6,2.4 0,4.8M889.9,752.8q2.8,4 0,8" stroke="#e8eef8" stroke-width=".9" fill="none"/></svg>
<div class="t" style="left:906.60px;top:747.20px;font-size:9.4px;color:#fff;transform:scaleX(0.9018);">12:26 πμ</div>
<div style="position:absolute;left:950.60px;top:745.40px;width:9.40px;height:22.60px;border-left:1px solid rgba(20,30,70,.7);box-sizing:border-box;background:linear-gradient(90deg,rgba(255,255,255,.35),rgba(255,255,255,.12));box-shadow:inset 1px 0 0 rgba(255,255,255,.4);"></div>
</body></html>
